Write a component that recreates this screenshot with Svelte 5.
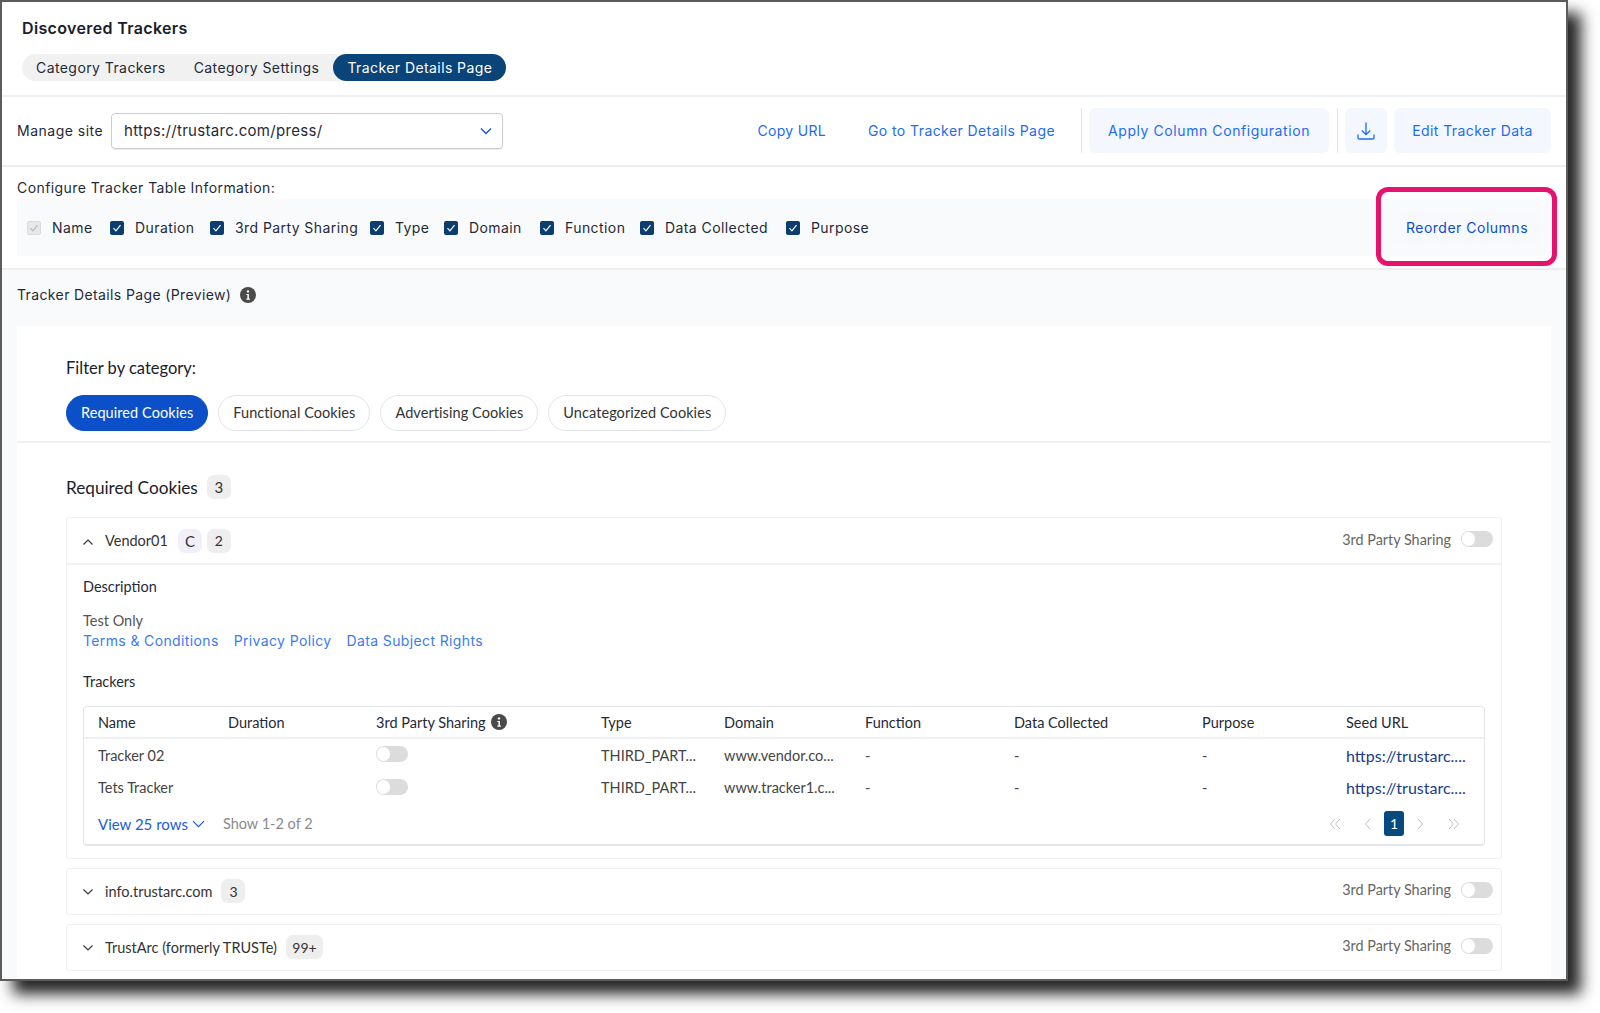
<script lang="ts">
  const options = [
    { label: 'Name', w: 43, disabled: true },
    { label: 'Duration', w: 60 },
    { label: '3rd Party Sharing', w: 120 },
    { label: 'Type', w: 34 },
    { label: 'Domain', w: 56 },
    { label: 'Function', w: 60 },
    { label: 'Data Collected', w: 106 },
    { label: 'Purpose', w: 56 }
  ];
  const chips = ['Required Cookies', 'Functional Cookies', 'Advertising Cookies', 'Uncategorized Cookies'];
  const headers = ['Name', 'Duration', '3rd Party Sharing', 'Type', 'Domain', 'Function', 'Data Collected', 'Purpose', 'Seed URL'];
  const rows = [
    { name: 'Tracker 02', domain: 'www.vendor.co...' },
    { name: 'Tets Tracker', domain: 'www.tracker1.c...' }
  ];
</script>

<div class="page">
  <div class="window">
    <section class="top">
      <h1>Discovered Trackers</h1>
      <div class="tabs">
        <span class="tab">Category Trackers</span>
        <span class="tab">Category Settings</span>
        <span class="tab active">Tracker Details Page</span>
      </div>
    </section>

    <section class="manage">
      <span class="manage-label">Manage site</span>
      <div class="select">
        <span>https://trustarc.com/press/</span>
        <svg width="12" height="8" viewBox="0 0 12 8"><path d="M1 1.5l5 5 5-5" fill="none" stroke="#1558d6" stroke-width="1.4"/></svg>
      </div>
      <div class="actions">
        <span class="link-btn copy">Copy URL</span>
        <span class="link-btn go">Go to Tracker Details Page</span>
        <i class="sep"></i>
        <span class="btn apply">Apply Column Configuration</span>
        <i class="sep"></i>
        <span class="btn icon">
          <svg width="20" height="20" viewBox="0 0 20 20" fill="none" stroke="#1c6cf0" stroke-width="1.3"><path d="M10 1.5v12M5.8 9.5l4.2 4.2 4.2-4.2"/><path d="M2 13.5v3.2q0 1.3 1.3 1.3h13.4q1.3 0 1.3-1.3v-3.2"/></svg>
        </span>
        <span class="btn edit">Edit Tracker Data</span>
      </div>
    </section>

    <section class="configure">
      <div class="cfg-label">Configure Tracker Table Information:</div>
      <div class="cfg-panel">
        {#each options as o}
          <span class="check" class:disabled={o.disabled}>
            <svg width="10" height="10" viewBox="0 0 10 10"><path d="M1.5 5.2l2.4 2.6 4.6-5.6" fill="none" stroke={o.disabled ? '#b4b8bd' : '#fff'} stroke-width="1.2"/></svg>
          </span>
          <span class="opt" style="width: {o.w}px">{o.label}</span>
        {/each}
        <span class="reorder">Reorder Columns</span>
        <span class="highlight"></span>
      </div>
    </section>

    <section class="preview">
      <div class="preview-title">
        Tracker Details Page (Preview)
        <svg class="info" width="16" height="16" viewBox="0 0 16 16"><circle cx="8" cy="8" r="8" fill="#4a4a4a"/><circle cx="8" cy="4.4" r="1.2" fill="#fff"/><path d="M6.3 7h2.6v4.6h1v1.1H6.3v-1.1h1.1V8.1H6.3z" fill="#fff"/></svg>
      </div>

      <div class="sheet">
        <div class="filter">
          <div class="filter-label">Filter by category:</div>
          <div class="chips">
            {#each chips as c, i}
              <span class="chip" class:on={i === 0}>{c}</span>
            {/each}
          </div>
        </div>

        <div class="list">
          <div class="list-title">Required Cookies <span class="count big">3</span></div>

          <div class="vendor">
            <div class="vendor-head">
              <svg class="chev" width="12" height="8" viewBox="0 0 12 8"><path d="M1.5 6.5L6 2l4.5 4.5" fill="none" stroke="#333" stroke-width="1.1"/></svg>
              <span class="vendor-name">Vendor01</span>
              <span class="count c">C</span>
              <span class="count">2</span>
              <span class="share">3rd Party Sharing</span>
              <span class="toggle"></span>
            </div>
            <div class="vendor-body">
              <div class="desc-title">Description</div>
              <div class="desc-text">Test Only</div>
              <div class="desc-links">
                <span>Terms &amp; Conditions</span>
                <span>Privacy Policy</span>
                <span>Data Subject Rights</span>
              </div>
              <div class="trackers-title">Trackers</div>

              <div class="table">
                <div class="tr th">
                  {#each headers as h}
                    <span>
                      {h}
                      {#if h === '3rd Party Sharing'}
                        <svg class="info-sm" width="16" height="16" viewBox="0 0 16 16"><circle cx="8" cy="8" r="8" fill="#4a4a4a"/><circle cx="8" cy="4.4" r="1.2" fill="#fff"/><path d="M6.3 7h2.6v4.6h1v1.1H6.3v-1.1h1.1V8.1H6.3z" fill="#fff"/></svg>
                      {/if}
                    </span>
                  {/each}
                </div>
                {#each rows as r}
                  <div class="tr td">
                    <span>{r.name}</span>
                    <span></span>
                    <span><i class="toggle raised"></i></span>
                    <span>THIRD_PART...</span>
                    <span>{r.domain}</span>
                    <span>-</span>
                    <span>-</span>
                    <span>-</span>
                    <span class="seed">https://trustarc....</span>
                  </div>
                {/each}
                <div class="table-foot">
                  <span class="view">View 25 rows</span>
                  <svg width="13" height="8" viewBox="0 0 13 8"><path d="M1 1.2l5.5 5.5L12 1.2" fill="none" stroke="#1b5be0" stroke-width="1.2"/></svg>
                  <span class="shown">Show 1-2 of 2</span>
                  <div class="pager">
                    <svg width="12" height="12" viewBox="0 0 12 12"><path d="M6 1L1.5 6 6 11M11 1L6.5 6l4.5 5" fill="none" stroke="#b9bdc3"/></svg>
                    <svg class="prev" width="7" height="12" viewBox="0 0 7 12"><path d="M6 1L1.5 6 6 11" fill="none" stroke="#b9bdc3"/></svg>
                    <span class="page-no">1</span>
                    <svg class="next" width="7" height="12" viewBox="0 0 7 12"><path d="M1 1l4.5 5L1 11" fill="none" stroke="#b9bdc3"/></svg>
                    <svg width="12" height="12" viewBox="0 0 12 12"><path d="M1 1l4.5 5L1 11M6 1l4.5 5L6 11" fill="none" stroke="#b9bdc3"/></svg>
                  </div>
                </div>
              </div>
            </div>
          </div>

          <div class="vendor closed">
            <div class="vendor-head">
              <svg class="chev" width="12" height="8" viewBox="0 0 12 8"><path d="M1.5 1.5L6 6l4.5-4.5" fill="none" stroke="#333" stroke-width="1.1"/></svg>
              <span class="vendor-name">info.trustarc.com</span>
              <span class="count">3</span>
              <span class="share">3rd Party Sharing</span>
              <span class="toggle"></span>
            </div>
          </div>

          <div class="vendor closed">
            <div class="vendor-head">
              <svg class="chev" width="12" height="8" viewBox="0 0 12 8"><path d="M1.5 1.5L6 6l4.5-4.5" fill="none" stroke="#333" stroke-width="1.1"/></svg>
              <span class="vendor-name">TrustArc (formerly TRUSTe)</span>
              <span class="count wide">99+</span>
              <span class="share">3rd Party Sharing</span>
              <span class="toggle"></span>
            </div>
          </div>
        </div>
      </div>
    </section>
  </div>
</div>

<style>
  :global(body) { margin: 0; background: #fff; }
  .page { width: 1600px; height: 1013px; overflow: hidden; background: #fff; }
  .window {
    width: 1568px; height: 981px; box-sizing: border-box; overflow: hidden;
    border: 2px solid #5c5c5c; background: #fff;
    box-shadow: 13px 13px 14px rgba(0, 0, 0, 0.85);
    font-family: Inter, "Liberation Sans", sans-serif; font-size: 14px; letter-spacing: 0.42px; color: #1f2a37;
    display: flex; flex-direction: column;
  }

  .top { height: 95px; flex: none; box-sizing: border-box; padding: 15px 0 0 20px; border-bottom: 2px solid #eef0f2; }
  h1 { margin: 0 0 15px; font-size: 16px; line-height: 22px; font-weight: 600; letter-spacing: 0.35px; color: #1a2029; }
  .tabs { display: inline-flex; height: 27px; align-items: center; background: #f1f1f1; border-radius: 14px; }
  .tab { padding: 0 14px; line-height: 27px; }
  .tab.active { background: #0a4478; color: #fff; border-radius: 14px; }

  .manage { height: 70px; flex: none; box-sizing: border-box; display: flex; align-items: center; padding: 0 15px 1px 15px; border-bottom: 2px solid #eceef0; }
  .manage-label { width: 94px; letter-spacing: 0.5px; }
  .select {
    width: 392px; height: 36px; box-sizing: border-box; display: flex; align-items: center; justify-content: space-between;
    padding: 0 10px 0 12px; border: 1px solid #c9ccd1; border-radius: 4px; box-shadow: 0 1px 1px rgba(0, 0, 0, 0.08);
    font-size: 15px; letter-spacing: 0.3px;
  }
  .actions { margin-left: auto; display: flex; align-items: center; color: #1c6cf0; }
  .link-btn.copy { margin-right: 42px; letter-spacing: 0.3px; }
  .link-btn.go { margin-right: 26px; }
  .sep { width: 1px; height: 45px; background: #e4e6e9; margin-right: 7px; }
  .btn { height: 45px; box-sizing: border-box; display: flex; align-items: center; justify-content: center; background: #f4f7fd; border-radius: 6px; }
  .apply { width: 240px; margin-right: 8px; letter-spacing: 0.58px; }
  .icon { width: 42px; margin-right: 7px; }
  .edit { width: 157px; }

  .configure { height: 103px; flex: none; box-sizing: border-box; padding: 11px 15px 0; border-bottom: 2px solid #eceef0; }
  .cfg-label { line-height: 20px; }
  .cfg-panel { position: relative; height: 57px; margin-top: 1px; display: flex; align-items: center; padding-left: 10px; background: #f9fafc; }
  .check { width: 14px; height: 14px; flex: none; display: flex; align-items: center; justify-content: center; background: #0b3d6e; border-radius: 2px; margin-right: 11px; }
  .check.disabled { background: #e6e8ea; border: 1px solid #d8dadd; box-sizing: border-box; }
  .opt { margin-right: 15px; white-space: nowrap; }
  .reorder {
    margin-left: auto; margin-right: 10px; width: 148px; height: 35px; display: flex; align-items: center; justify-content: center;
    background: #f7f9fd; color: #0b4fc9; border-radius: 4px; letter-spacing: 0.5px;
  }
  .highlight { position: absolute; left: 1359px; top: -12px; width: 181px; height: 79px; box-sizing: border-box; border: 5px solid #e5126e; border-radius: 12px; }

  .preview { flex: 1; min-height: 0; background: #f9fafc; padding: 0 15px; }
  .preview-title { height: 56px; box-sizing: border-box; padding-bottom: 7px; display: flex; align-items: center; letter-spacing: 0.37px; }
  .info { margin-left: 9px; }
  .sheet { height: 700px; background: #fff; font-family: Lato, "Liberation Sans", sans-serif; letter-spacing: 0; }
  .filter { height: 117px; box-sizing: border-box; padding: 31px 0 0 49px; border-bottom: 2px solid #eef0f2; }
  .filter-label { font-size: 16.5px; line-height: 22px; color: #1a2029; }
  .chips { display: flex; gap: 10px; margin-top: 15.5px; }
  .chip {
    height: 36px; box-sizing: border-box; display: flex; align-items: center; padding: 0 14px; font-size: 14.5px; letter-spacing: 0.07px;
    border: 1px solid #e2e3e5; border-radius: 18px; color: #333;
  }
  .chip.on { background: #0b50c8; border-color: #0b50c8; color: #fff; }

  .list { padding: 32px 49px 0; }
  .list-title { display: flex; align-items: center; height: 24px; font-size: 17.2px; color: #1a2029; margin-bottom: 18px; }
  .count { min-width: 24px; height: 24px; margin-left: 5px; padding: 0 4px; box-sizing: border-box; display: inline-flex; align-items: center; justify-content: center; background: #eeeeee; border-radius: 7px; font-size: 14px; color: #333; }
  .count.big { margin-left: 9px; font-size: 15px; }
  .count.c { background: #f1f0fa; margin-left: 10px; font-size: 15px; }
  .closed .count { margin-left: 9px; }
  .count.wide { width: 37px; }

  .vendor { border: 1px solid #eff0f2; border-radius: 3px; margin-bottom: 9px; }
  .vendor-head { height: 45px; display: flex; align-items: center; padding: 0 8px 0 15px; font-size: 14.5px; color: #333; }
  .chev { margin-right: 11px; margin-top: 2px; }
  .share { margin-left: auto; margin-right: 10px; font-size: 14.4px; color: #666; margin-top: -3px; }
  .toggle { display: inline-block; position: relative; width: 32px; height: 16px; background: #dcdcdc; border-radius: 8px; margin-top: -3px; }
  .toggle::before { content: ''; position: absolute; left: 1px; top: 1px; width: 13px; height: 14px; background: #fff; border-radius: 7px; }
  .toggle.raised { margin-top: -2px; }

  .vendor-body { border-top: 2px solid #f1f2f4; padding: 12px 16px 0; height: 294.5px; box-sizing: border-box; }
  .desc-title { font-size: 14.5px; line-height: 20px; color: #1f2a37; }
  .desc-text { margin-top: 14px; font-size: 14.5px; line-height: 20px; color: #555; }
  .desc-links { display: flex; gap: 15px; font-family: Inter, "Liberation Sans", sans-serif; font-size: 14px; letter-spacing: 0.37px; line-height: 20px; color: #3b7bf0; }
  .trackers-title { margin-top: 21px; font-size: 14.5px; line-height: 20px; color: #1f2a37; }

  .table { margin-top: 14px; width: 1402px; height: 140px; box-sizing: border-box; border: 1px solid #e4e6e9; border-bottom-width: 2px; border-radius: 4px; font-size: 14.5px; color: #333; }
  .tr { display: grid; grid-template-columns: 144px 148px 225px 123px 141px 149px 188px 144px 1fr; align-items: center; }
  .tr span { white-space: nowrap; display: flex; align-items: center; }
  .th { height: 30px; border-bottom: 2px solid #eef0f2; color: #1f2a37; }
  .td { height: 32.5px; color: #444; }
  .th span:first-child, .td span:first-child { padding-left: 14px; }
  .info-sm { margin-left: 5px; }
  .seed { color: #1a3a8a; font-size: 16px; }
  .table-foot { display: flex; align-items: center; height: 39px; padding: 0 0 0 14px; }
  .view { color: #1b5be0; margin-right: 4px; font-size: 15px; }
  .shown { color: #8a8a8a; margin-left: 18px; }
  .pager { margin-left: auto; display: flex; align-items: center; margin-right: 24px; }
  .prev { margin-left: 23px; }
  .page-no { width: 20px; height: 25px; margin: 0 13px; display: flex; align-items: center; justify-content: center; background: #064a80; color: #fff; border-radius: 3px; font-size: 14px; }
  .next { margin-right: 24px; }
</style>
